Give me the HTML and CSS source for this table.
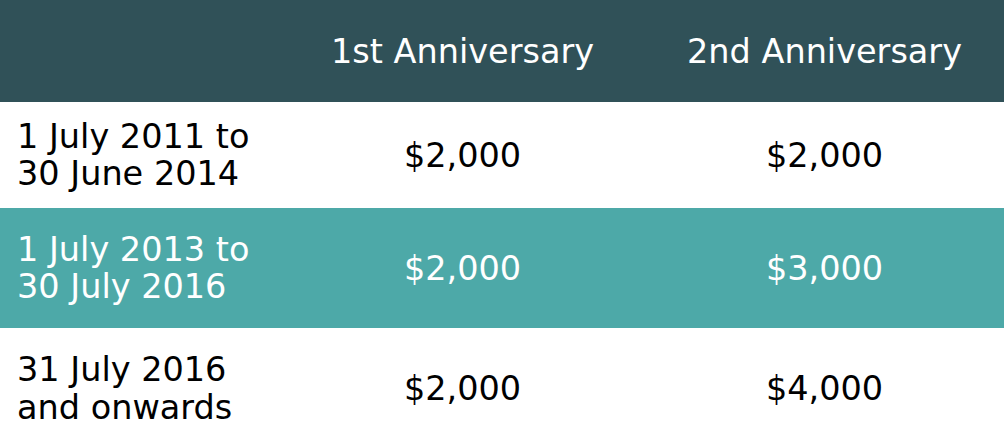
FILE: index.html
```html
<!DOCTYPE html>
<html>
<head>
<meta charset="utf-8">
<link rel="stylesheet" href="styles.css">
</head>
<body>
<table class="plan">
  <thead>
    <tr class="head-row">
      <th class="c-date"></th>
      <th class="c-val">1st Anniversary</th>
      <th class="c-val">2nd Anniversary</th>
    </tr>
  </thead>
  <tbody>
    <tr class="row row-1">
      <td class="c-date">1 July 2011 to<br>30 June 2014</td>
      <td class="c-val">$2,000</td>
      <td class="c-val">$2,000</td>
    </tr>
    <tr class="row row-2 alt">
      <td class="c-date">1 July 2013 to<br>30 July 2016</td>
      <td class="c-val">$2,000</td>
      <td class="c-val">$3,000</td>
    </tr>
    <tr class="row row-3">
      <td class="c-date">31 July 2016<br>and onwards</td>
      <td class="c-val">$2,000</td>
      <td class="c-val">$4,000</td>
    </tr>
  </tbody>
</table>
</body>
</html>
```
FILE: styles.css
```css
html, body {
  margin: 0;
  padding: 0;
  background: #ffffff;
}
.plan {
  width: 1004px;
  border-collapse: collapse;
  table-layout: fixed;
  font-family: "DejaVu Sans", sans-serif;
  font-size: 33.5px;
  line-height: 37px;
  color: #000;
}
.plan th, .plan td {
  padding: 0;
  vertical-align: middle;
  font-weight: normal;
}
.c-date {
  width: 280px;
  text-align: left;
  padding-left: 17px !important;
  box-sizing: border-box;
}
.c-val {
  text-align: center;
}
.head-row th:nth-child(2) { width: 365px; }
.head-row {
  background: #305158;
  color: #ffffff;
  height: 102px;
}
.row-1 { height: 106px; }
.row-2 { height: 120px; }
.row-3 { height: 118px; }
.row-3 td {
  padding-top: 4px;
  line-height: 38px;
}
.alt {
  background: #4da9a8;
  color: #ffffff;
}
```
